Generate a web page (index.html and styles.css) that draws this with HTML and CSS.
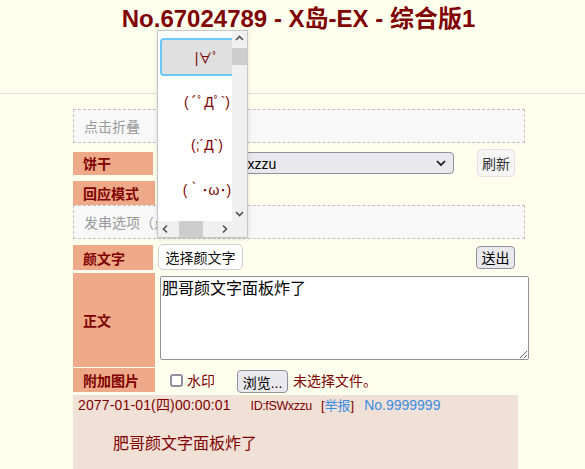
FILE: index.html
```html
<!DOCTYPE html>
<html lang="zh-CN">
  <head>
    <meta charset="utf-8">
    <title>No.67024789 - X岛-EX - 综合版1</title>
    <link rel="stylesheet" href="styles.css">
  </head>
  <body>
    <h1 class="thread-title">No.67024789 - X岛-EX - 综合版1</h1>
    <hr class="title-rule">

    <form class="post-form">
      <div class="fold-box">点击折叠</div>

      <div class="form-row row-cookie">
        <div class="form-label">饼干</div>
        <div class="fake-select">
          <span>当前饼干fSWxzzu</span>
          <svg width="12" height="12" viewBox="0 0 12 12"><polyline points="2,4 6,8 10,4" fill="none" stroke="#111" stroke-width="1.6"/></svg>
        </div>
        <button type="button" class="btn-refresh">刷新</button>
      </div>

      <div class="form-row row-mode">
        <div class="form-label label-wide">回应模式</div>
      </div>

      <div class="fold-box">发串选项（点击展开）</div>

      <div class="form-row row-kaomoji">
        <div class="form-label">颜文字</div>
        <button type="button" class="btn-light">选择颜文字</button>
        <button type="submit" class="btn-sys btn-send">送出</button>
      </div>

      <div class="form-row row-content">
        <div class="form-label label-wide">正文</div>
        <textarea class="content-input">肥哥颜文字面板炸了</textarea>
      </div>

      <div class="form-row row-image">
        <div class="form-label label-wide">附加图片</div>
        <label class="watermark"><input type="checkbox" class="watermark-box">水印</label>
        <button type="button" class="btn-sys btn-browse">浏览...</button>
        <span class="file-status">未选择文件。</span>
      </div>
    </form>

    <div class="reply">
      <div class="reply-head">
        <span class="reply-time">2077-01-01(四)00:00:01</span>
        <span class="reply-uid">ID:fSWxzzu</span>
        <span class="reply-report">[<a href="#">举报</a>]</span>
        <a class="reply-no" href="#">No.9999999</a>
      </div>
      <div class="reply-body">肥哥颜文字面板炸了</div>
    </div>

    <!-- the broken kaomoji panel, floating over the form -->
    <div class="kaomoji-pop">
      <div class="kaomoji-list">
        <div class="kaomoji-item is-active">|∀ﾟ</div>
        <div class="kaomoji-item">(´ﾟДﾟ`)</div>
        <div class="kaomoji-item">(;´Д`)</div>
        <div class="kaomoji-item">(｀･ω･)</div>
      </div>
      <div class="vbar">
        <div class="bar-btn">
          <svg width="15" height="15" viewBox="0 0 15 15"><polyline points="4,9 7.5,5.5 11,9" fill="none" stroke="#505050" stroke-width="1.6"/></svg>
        </div>
        <div class="vbar-track"><div class="vbar-thumb"></div></div>
        <div class="bar-btn">
          <svg width="15" height="15" viewBox="0 0 15 15"><polyline points="4,6 7.5,9.5 11,6" fill="none" stroke="#505050" stroke-width="1.6"/></svg>
        </div>
      </div>
      <div class="hbar">
        <div class="bar-btn">
          <svg width="15" height="16" viewBox="0 0 15 16"><polyline points="9,4.5 5.5,8 9,11.5" fill="none" stroke="#505050" stroke-width="1.6"/></svg>
        </div>
        <div class="hbar-track"><div class="hbar-thumb"></div></div>
        <div class="bar-btn">
          <svg width="15" height="16" viewBox="0 0 15 16"><polyline points="6,4.5 9.5,8 6,11.5" fill="none" stroke="#505050" stroke-width="1.6"/></svg>
        </div>
      </div>
      <div class="bar-corner"></div>
    </div>
  </body>
</html>
```

FILE: styles.css
```css
body {
  margin: 0;
  position: relative;
  background: #ffffee;
  color: #800000;
  font-family: "Liberation Sans", "Noto Sans CJK SC", sans-serif;
  font-size: 14px;
}

.thread-title {
  margin: 5px 0 0;
  padding-left: 12px;
  text-align: center;
  font-size: 24px;
  line-height: 28px;
  font-weight: bold;
  color: #800000;
}

.title-rule {
  margin: 60px 0 0;
  height: 0;
  border: 0;
  border-top: 1px solid #e0e0d6;
}

.post-form {
  margin: 15px 0 0 73px;
  width: 452px;
}

.fold-box {
  box-sizing: border-box;
  height: 34px;
  padding-left: 10px;
  display: flex;
  align-items: center;
  background: #f8f8f8;
  border: 1px dashed #c0c0c0;
  color: #999;
  white-space: nowrap;
  overflow: hidden;
}

.form-row {
  display: flex;
  align-items: center;
}

.form-label {
  box-sizing: border-box;
  flex-shrink: 0;
  width: 80px;
  align-self: stretch;
  padding-left: 10px;
  display: flex;
  align-items: center;
  background: #eeaa88;
  font-weight: bold;
  color: #800000;
}

.label-wide {
  width: 82px;
}

/* cookie row */
.row-cookie {
  margin-top: 6px;
  height: 28px;
}

.row-cookie .form-label {
  align-self: center;
  height: 23px;
}

.fake-select {
  box-sizing: border-box;
  width: 294px;
  height: 22px;
  margin-left: 7px;
  padding: 0 6px 0 4px;
  display: flex;
  align-items: center;
  justify-content: space-between;
  background: #e9e9ed;
  border: 1px solid #8f8f9d;
  border-radius: 4px;
  color: #000;
}

.btn-refresh {
  box-sizing: border-box;
  width: 38px;
  height: 28px;
  margin-left: auto;
  margin-right: 10px;
  padding: 0;
  background: #f5f5f5;
  border: 1px solid #e2e2e2;
  border-radius: 4px;
  color: #333;
  font: 14px "Liberation Sans", "Noto Sans CJK SC", sans-serif;
}

/* reply mode row */
.row-mode {
  margin-top: 4px;
  height: 24px;
}

/* kaomoji row */
.row-kaomoji {
  margin-top: 5px;
  height: 26px;
}

.row-kaomoji .form-label {
  margin-top: 1px;
}

.btn-light {
  box-sizing: border-box;
  width: 85px;
  height: 26px;
  margin-left: 5px;
  padding: 0;
  background: #fff;
  border: 1px solid #cfcfcf;
  border-radius: 5px;
  color: #111;
  font: 14px "Liberation Sans", "Noto Sans CJK SC", sans-serif;
}

.btn-sys {
  box-sizing: border-box;
  padding: 0;
  background: #e9e9ed;
  border: 1px solid #8f8f9d;
  border-radius: 4px;
  color: #000;
  font: 14px "Liberation Sans", "Noto Sans CJK SC", sans-serif;
}

.btn-send {
  width: 39px;
  height: 23px;
  margin-left: auto;
  margin-right: 10px;
}

/* content row */
.row-content {
  margin-top: 3px;
  height: 94px;
}

.content-input {
  box-sizing: border-box;
  flex-shrink: 0;
  align-self: flex-start;
  width: 369px;
  height: 84px;
  margin: 3px 0 0 5px;
  padding: 2px 1px;
  background: #fff;
  border: 1px solid #8f8f9d;
  border-radius: 2px;
  color: #000;
  font: 16px/20px "Liberation Sans", "Noto Sans CJK SC", sans-serif;
}

/* image row */
.row-image {
  margin-top: 1px;
  height: 24px;
}

.watermark {
  margin-left: 15px;
  display: flex;
  align-items: center;
  color: #800000;
}

.watermark-box {
  appearance: none;
  box-sizing: border-box;
  width: 13px;
  height: 13px;
  margin: 0 4px 0 0;
  background: #fff;
  border: 2px solid #8f8f9d;
  border-radius: 3px;
}

.btn-browse {
  width: 51px;
  height: 23px;
  margin: 3px 0 0 22px;
}

.file-status {
  margin-left: 5px;
  color: #800000;
}

/* reply */
.reply {
  box-sizing: border-box;
  width: 445px;
  height: 80px;
  margin: 3px 0 0 73px;
  padding: 2px 5px;
  background: #f0e0d6;
}

.reply-head {
  display: flex;
  align-items: baseline;
  line-height: 16px;
  white-space: nowrap;
}

.reply-time {
  letter-spacing: 0.15px;
}

.reply-uid {
  margin-left: 20px;
  font-size: 12.5px;
  letter-spacing: -0.4px;
}

.reply-report {
  margin-left: 9px;
  font-size: 13px;
}

.reply-report a,
.reply-no {
  color: #3a8de2;
  text-decoration: none;
}

.reply-no {
  margin-left: 10px;
}

.reply-body {
  margin: 20px 0 0 35px;
  font-size: 16px;
  line-height: 20px;
}

/* kaomoji panel */
.kaomoji-pop {
  position: absolute;
  left: 157px;
  top: 30px;
  width: 89px;
  height: 206px;
  display: grid;
  grid-template-columns: 74px 15px;
  grid-template-rows: 190px 16px;
  background: #fff;
  border: 1px solid #c6c6c6;
  box-shadow: 0 1px 5px rgba(0, 0, 0, 0.12);
}

.kaomoji-list {
  overflow: hidden;
  padding: 7px 0 0 2px;
}

.kaomoji-item {
  box-sizing: border-box;
  width: 94px;
  height: 38px;
  margin-bottom: 6px;
  display: flex;
  align-items: center;
  justify-content: center;
  border: 2px solid transparent;
  border-radius: 4px;
  color: #800000;
  white-space: nowrap;
}

.kaomoji-item.is-active {
  background: #e0e0e0;
  border-color: #6cc8fc;
}

.vbar,
.hbar,
.bar-corner {
  background: #f0f0f0;
}

.vbar {
  display: flex;
  flex-direction: column;
}

.hbar {
  display: flex;
}

.bar-btn {
  display: flex;
}

.vbar-track {
  flex: 1;
}

.vbar-thumb {
  height: 17px;
  margin-top: 2px;
  background: #cdcdcd;
}

.hbar-track {
  flex: 1;
}

.hbar-thumb {
  width: 24px;
  height: 100%;
  margin-left: 6px;
  background: #cdcdcd;
}
```
